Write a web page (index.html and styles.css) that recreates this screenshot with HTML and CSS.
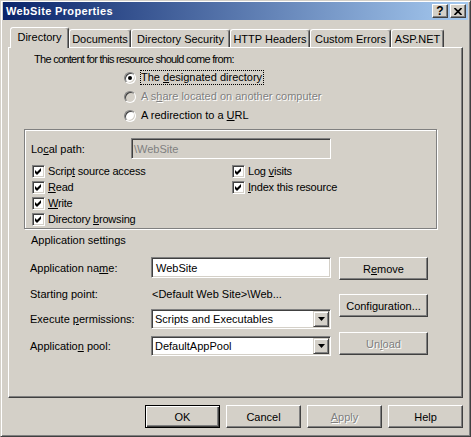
FILE: index.html
```html
<!DOCTYPE html>
<html>
<head>
<meta charset="utf-8">
<link rel="stylesheet" href="styles.css">
</head>
<body>
<div class="window">
  <div class="titlebar">
    <span class="title">WebSite Properties</span>
    <div class="tbtns">
      <span class="tbtn q">?</span>
      <span class="tbtn"><svg width="8" height="7" viewBox="0 0 8 7"><path d="M0.5 0 L7.5 7 M7.5 0 L0.5 7" stroke="#000" stroke-width="1.7"/></svg></span>
    </div>
  </div>

  <div class="tabs">
    <div class="tab sel w1">Directory</div>
    <div class="tab w2">Documents</div>
    <div class="tab w3">Directory Security</div>
    <div class="tab w4">HTTP Headers</div>
    <div class="tab w5">Custom Errors</div>
    <div class="tab w6">ASP.NET</div>
  </div>

  <div class="panel">
    <div class="lead">The content for this resource should come from:</div>
    <div class="radios">
      <div class="rrow"><span class="radio"><span class="dot"></span></span><span class="rlabel focus">The <u>d</u>esignated directory</span></div>
      <div class="rrow"><span class="radio dis"></span><span class="rlabel distext">A s<u>h</u>are located on another computer</span></div>
      <div class="rrow"><span class="radio"></span><span class="rlabel">A redirection to a <u>U</u>RL</span></div>
    </div>

    <div class="group">
      <div class="path-row">
        <span class="plabel">Lo<u>c</u>al path:</span>
        <span class="input disbox">\WebSite</span>
      </div>
      <div class="checks">
        <div class="ccol left">
          <div class="crow"><span class="cb"><svg width="7" height="7" viewBox="0 0 7 7"><path d="M0 2 L2 4 L6 0 L6 3 L2 7 L0 5 Z" fill="#000"/></svg></span><span>Scrip<u>t</u> source access</span></div>
          <div class="crow"><span class="cb"><svg width="7" height="7" viewBox="0 0 7 7"><path d="M0 2 L2 4 L6 0 L6 3 L2 7 L0 5 Z" fill="#000"/></svg></span><span><u>R</u>ead</span></div>
          <div class="crow"><span class="cb"><svg width="7" height="7" viewBox="0 0 7 7"><path d="M0 2 L2 4 L6 0 L6 3 L2 7 L0 5 Z" fill="#000"/></svg></span><span><u>W</u>rite</span></div>
          <div class="crow"><span class="cb"><svg width="7" height="7" viewBox="0 0 7 7"><path d="M0 2 L2 4 L6 0 L6 3 L2 7 L0 5 Z" fill="#000"/></svg></span><span>Directory <u>b</u>rowsing</span></div>
        </div>
        <div class="ccol">
          <div class="crow"><span class="cb"><svg width="7" height="7" viewBox="0 0 7 7"><path d="M0 2 L2 4 L6 0 L6 3 L2 7 L0 5 Z" fill="#000"/></svg></span><span>Log <u>v</u>isits</span></div>
          <div class="crow"><span class="cb"><svg width="7" height="7" viewBox="0 0 7 7"><path d="M0 2 L2 4 L6 0 L6 3 L2 7 L0 5 Z" fill="#000"/></svg></span><span><u>I</u>ndex this resource</span></div>
        </div>
      </div>
    </div>

    <div class="section">Application settings</div>

    <div class="app">
      <div class="app-left">
        <div class="arow r1">
          <span class="alabel">Application na<u>m</u>e:</span>
          <span class="input txt">WebSite</span>
        </div>
        <div class="arow r2">
          <span class="alabel">Starting point:</span>
          <span class="value">&lt;Default Web Site&gt;\Web...</span>
        </div>
        <div class="arow r3">
          <span class="alabel">Execute <u>p</u>ermissions:</span>
          <span class="select"><span class="stext">Scripts and Executables</span><span class="dd"><svg width="7" height="4" viewBox="0 0 7 4"><path d="M0 0 H7 L3.5 4 Z" fill="#000"/></svg></span></span>
        </div>
        <div class="arow r4">
          <span class="alabel">Applicatio<u>n</u> pool:</span>
          <span class="select"><span class="stext">DefaultAppPool</span><span class="dd"><svg width="7" height="4" viewBox="0 0 7 4"><path d="M0 0 H7 L3.5 4 Z" fill="#000"/></svg></span></span>
        </div>
      </div>
      <div class="app-right">
        <span class="btn wide">R<u>e</u>move</span>
        <span class="btn wide b2">Confi<u>g</u>uration...</span>
        <span class="btn wide b3 dis">Un<u>l</u>oad</span>
      </div>
    </div>
  </div>

  <div class="footer">
    <span class="btn default">OK</span>
    <span class="btn">Cancel</span>
    <span class="btn dis"><u>A</u>pply</span>
    <span class="btn">Help</span>
  </div>
</div>
</body>
</html>
```

FILE: styles.css
```css
* { box-sizing: border-box; }

body {
  margin: 0;
  font: 11px "Liberation Sans", Arial, sans-serif;
  color: #000;
  background: #D4D0C8;
}

u { text-underline-offset: 1px; }

.window {
  width: 471px;
  height: 437px;
  background: #D4D0C8;
  border: 1px solid;
  border-color: #D4D0C8 #404040 #404040 #D4D0C8;
  box-shadow: inset 1px 1px #fff, inset -1px -1px #808080;
  padding: 1px 2px 0 2px;
  display: flex;
  flex-direction: column;
}

/* title bar */
.titlebar {
  height: 18px;
  background: linear-gradient(to right, #0A246A, #A6CAF0);
  display: flex;
  align-items: center;
  justify-content: space-between;
  padding: 0 2px 0 3px;
}
.title {
  color: #fff;
  font-weight: bold;
  letter-spacing: 0.35px;
}
.tbtns { display: flex; gap: 2px; }
.tbtn {
  width: 16px;
  height: 14px;
  background: #D4D0C8;
  border: 1px solid;
  border-color: #fff #404040 #404040 #fff;
  box-shadow: inset -1px -1px #808080;
  display: flex;
  align-items: center;
  justify-content: center;
}
.tbtn.q { font-weight: bold; font-size: 12px; line-height: 12px; }

/* tabs */
.tabs {
  display: flex;
  align-items: flex-end;
  height: 20px;
  margin: 7px 0 0 7px;
  position: relative;
  z-index: 1;
}
.tab {
  height: 18px;
  border: 1px solid;
  border-bottom: none;
  border-color: #fff #404040 transparent #fff;
  box-shadow: inset -1px 0 #808080;
  border-radius: 3px 3px 0 0;
  background: #D4D0C8;
  display: flex;
  align-items: center;
  justify-content: center;
  white-space: nowrap;
}
.tab.sel {
  height: 21px;
  margin-bottom: -1px;
  padding-bottom: 2px;
}
.w1 { width: 59px; }
.w2 { width: 62px; }
.w3 { width: 99px; }
.w4 { width: 80px; }
.w5 { width: 81px; }
.w6 { width: 53px; }

/* panel */
.panel {
  margin: 0 5px;
  height: 351px;
  border: 1px solid;
  border-color: #fff #404040 #404040 #fff;
  box-shadow: inset -1px -1px #808080;
}

.lead {
  margin: 5px 0 0 25px;
  line-height: 13px;
  letter-spacing: -0.72px;
}

.radios { margin: 2px 0 0 115px; }
.rrow {
  height: 19px;
  display: flex;
  align-items: center;
  gap: 4px;
}
.radio {
  width: 12px;
  height: 12px;
  border-radius: 50%;
  border: 1px solid;
  border-color: #808080 #fff #fff #808080;
  box-shadow: inset 1px 1px #404040, inset -1px -1px #D4D0C8;
  background: #fff;
  display: flex;
  align-items: center;
  justify-content: center;
}
.radio.dis { background: #D4D0C8; }
.dot {
  width: 4px;
  height: 4px;
  border-radius: 50%;
  background: #000;
}
.rlabel {
  border: 1px solid transparent;
  line-height: 13px;
  padding-right: 1px;
}
.rlabel.focus { border: 1px dotted #000; }
.distext { color: #808080; text-shadow: 1px 1px #fff; }

/* group */
.group {
  margin: 4px 0 0 15px;
  width: 413px;
  height: 100px;
  border: 1px solid #808080;
  box-shadow: 1px 1px #fff, inset 1px 1px #fff;
  padding: 8px 0 0 6px;
}
.path-row {
  display: flex;
  align-items: center;
  height: 21px;
}
.plabel { width: 100px; }
.input {
  display: flex;
  align-items: center;
  border: 1px solid;
  border-color: #808080 #fff #fff #808080;
  box-shadow: inset 1px 1px #404040, inset -1px -1px #D4D0C8;
  background: #fff;
}
.disbox {
  width: 200px;
  height: 21px;
  background: #D4D0C8;
  color: #808080;
  padding-left: 2px;
}
.checks {
  display: flex;
  margin: 4px 0 0 1px;
}
.ccol.left { width: 200px; }
.crow {
  height: 16px;
  display: flex;
  align-items: center;
  gap: 3px;
  letter-spacing: -0.2px;
}
.cb {
  width: 13px;
  height: 13px;
  border: 1px solid;
  border-color: #808080 #fff #fff #808080;
  box-shadow: inset 1px 1px #404040, inset -1px -1px #D4D0C8;
  background: #fff;
  display: flex;
  align-items: center;
  justify-content: center;
}

.section {
  margin: 5px 0 0 22px;
  line-height: 13px;
}

/* application settings */
.app {
  display: flex;
  margin: 10px 0 0 21px;
}
.app-left { width: 301px; }
.arow { display: flex; align-items: center; }
.alabel { width: 121px; }
.r1 { height: 21px; }
.r2 { height: 17px; margin-top: 7px; }
.r3 { height: 20px; margin-top: 7px; }
.r4 { height: 20px; margin-top: 7px; }
.txt {
  width: 180px;
  height: 21px;
  padding-left: 4px;
}
.value { padding-left: 1px; }
.select {
  width: 180px;
  height: 20px;
  display: flex;
  align-items: center;
  justify-content: space-between;
  border: 1px solid;
  border-color: #808080 #fff #fff #808080;
  box-shadow: inset 1px 1px #404040, inset -1px -1px #D4D0C8;
  background: #fff;
  padding: 1px;
}
.stext { padding-left: 2px; }
.dd {
  width: 16px;
  height: 16px;
  background: #D4D0C8;
  border: 1px solid;
  border-color: #D4D0C8 #404040 #404040 #D4D0C8;
  box-shadow: inset 1px 1px #fff, inset -1px -1px #808080;
  display: flex;
  align-items: center;
  justify-content: center;
}
.app-right {
  margin-left: 8px;
  display: flex;
  flex-direction: column;
}

/* buttons */
.btn {
  width: 75px;
  height: 23px;
  border: 1px solid;
  border-color: #fff #404040 #404040 #fff;
  box-shadow: inset -1px -1px #808080;
  background: #D4D0C8;
  display: flex;
  align-items: center;
  justify-content: center;
}
.btn.wide { width: 89px; }
.btn.b2 { margin-top: 14px; }
.btn.b3 { margin-top: 15px; }
.btn.default {
  border-color: #000;
  box-shadow: inset 1px 1px #fff, inset -1px -1px #404040, inset -2px -2px #808080;
}
.btn.dis { color: #808080; text-shadow: 1px 1px #fff; }

.footer {
  display: flex;
  justify-content: flex-end;
  gap: 6px;
  margin: 7px 5px 0 0;
}
```
